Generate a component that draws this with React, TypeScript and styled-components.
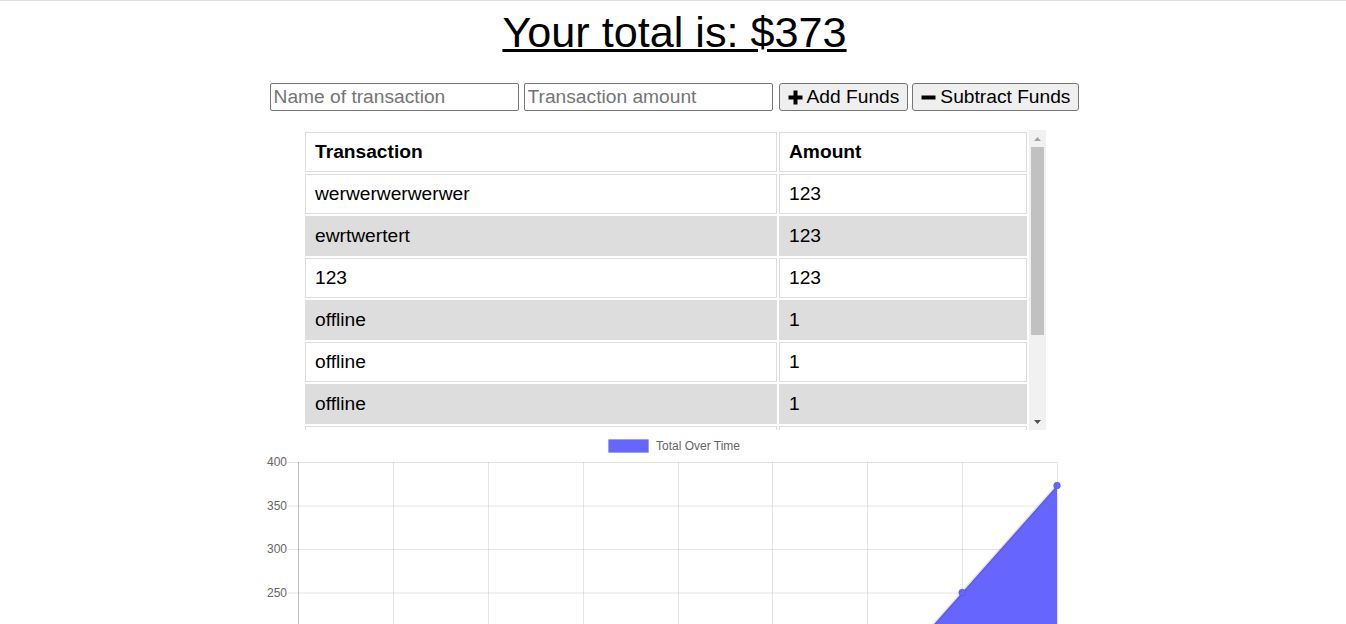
import React from "react";
import styled, { createGlobalStyle } from "styled-components";

const GlobalStyle = createGlobalStyle`
  html, body {
    margin: 0;
    padding: 0;
    overflow: hidden;
    background: #fff;
  }
  body {
    font-family: "Liberation Sans", Arial, sans-serif;
    color: #000;
  }
`;

const Page = styled.div`
  border-top: 1px solid #dedede;
  padding: 7px 0 0 3px;
`;

const Title = styled.h1`
  margin: 0;
  height: 49px;
  text-align: center;
  font-size: 43.2px;
  font-weight: normal;
  line-height: 49px;
  text-decoration: underline;
  text-decoration-thickness: 3px;
  text-decoration-skip-ink: auto;
`;

const FormRow = styled.div`
  display: flex;
  justify-content: center;
  align-items: center;
  margin-top: 26px;
  height: 28px;
`;

const TextInput = styled.input<{ $gap: number }>`
  box-sizing: border-box;
  width: 249px;
  height: 28px;
  margin: 0 ${(p) => p.$gap}px 0 0;
  padding: 1px 3px;
  border: 1px solid #767676;
  border-radius: 2px;
  font-family: "Liberation Sans", Arial, sans-serif;
  font-size: 19.2px;
  color: #000;
  background: #fff;
  &::placeholder {
    color: #757575;
  }
`;

const Button = styled.button<{ $gap: number }>`
  box-sizing: border-box;
  display: flex;
  align-items: center;
  gap: 4px;
  height: 28px;
  margin: 0 ${(p) => p.$gap}px 0 0;
  padding: 0 8px;
  border: 1px solid #767676;
  border-radius: 3px;
  background: #efefef;
  font-family: "Liberation Sans", Arial, sans-serif;
  font-size: 19.2px;
  color: #000;
  white-space: nowrap;
`;

const TableBox = styled.div`
  display: flex;
  width: 743px;
  height: 300px;
  margin: 19px auto 0;
`;

const TableViewport = styled.div`
  flex: 1;
  min-width: 0;
  overflow: hidden;
`;

const ScrollBar = styled.div`
  width: 17px;
  flex: none;
  display: flex;
  flex-direction: column;
  background: #f1f1f1;
`;

const ScrollArrow = styled.div`
  height: 17px;
  flex: none;
  display: flex;
  align-items: center;
  justify-content: center;
`;

const ScrollThumb = styled.div<{ $size: number }>`
  height: ${(p) => p.$size}px;
  margin: 0 2px;
  background: #c1c1c1;
  flex: none;
`;

const ScrollSpacer = styled.div`
  flex: 1;
`;

const Table = styled.table`
  width: 100%;
  border-collapse: separate;
  border-spacing: 2px;
  font-size: 19.2px;
  line-height: 22px;
`;

const HeadCell = styled.th<{ $narrow?: boolean }>`
  text-align: left;
  font-weight: bold;
  padding: 8px 9px;
  border: 1px solid #ddd;
  background: #fff;
  ${(p) => (p.$narrow ? "width: 228px;" : "")}
`;

const Row = styled.tr<{ $striped: boolean }>`
  & > td {
    background: ${(p) => (p.$striped ? "#ddd" : "#fff")};
  }
`;

const Cell = styled.td`
  padding: 8px 9px;
  border: 1px solid #ddd;
`;

const ChartWrap = styled.div`
  display: flex;
  justify-content: center;
`;

const ChartSvg = styled.svg`
  display: block;
  flex: none;
`;

const PlusIcon = () => (
  <svg width="15" height="15" viewBox="0 0 15 15" aria-hidden="true">
    <rect x="5.5" y="0.5" width="4" height="14" fill="#000" />
    <rect x="0.5" y="5.5" width="14" height="4" fill="#000" />
  </svg>
);

const MinusIcon = () => (
  <svg width="15" height="15" viewBox="0 0 15 15" aria-hidden="true">
    <rect x="0.5" y="5.5" width="14" height="4" fill="#000" />
  </svg>
);

const ArrowIcon = ({ up, color }: { up: boolean; color: string }) => (
  <svg width="7" height="4" viewBox="0 0 7 4" aria-hidden="true">
    <polygon points={up ? "3.5,0 7,4 0,4" : "0,0 7,0 3.5,4"} fill={color} />
  </svg>
);

const rows: [string, string][] = [
  ["werwerwerwerwer", "123"],
  ["ewrtwertert", "123"],
  ["123", "123"],
  ["offline", "1"],
  ["offline", "1"],
  ["offline", "1"],
  ["offline", "1"],
  ["test", "5"],
  ["test", "-5"],
];

const W = 831;
const H = 420;
const plotLeft = 39;
const plotRight = 798;
const plotTop = 32;
const unit = 0.87;
const yOf = (v: number) => plotTop + (400 - v) * unit;
const data = [0, 0, 1, 2, 3, 4, 127, 250, 373];
const xOf = (i: number) => plotLeft + (i * (plotRight - plotLeft)) / (data.length - 1);

const Chart = () => {
  const ticks = [400, 350, 300, 250, 200, 150, 100, 50, 0];
  const zeroY = yOf(0);
  const linePts = data.map((v, i) => `${xOf(i)},${yOf(v)}`).join(" ");
  const areaPts = `${xOf(0)},${zeroY} ${linePts} ${xOf(data.length - 1)},${zeroY}`;
  return (
    <ChartSvg width={W} height={H} viewBox={`0 0 ${W} ${H}`}>
      <rect x={349.5} y={9.5} width={40} height={13} fill="#6666ff" stroke="rgba(0,0,0,0.1)" strokeWidth={1} />
      <text x={397} y={20} fontFamily="Liberation Sans, Arial, sans-serif" fontSize={12} fill="#666">
        Total Over Time
      </text>
      {ticks.map((t) => (
        <g key={t}>
          <line x1={29} x2={plotRight} y1={yOf(t) + 0.5} y2={yOf(t) + 0.5} stroke="rgba(0,0,0,0.1)" strokeWidth={1} />
          <text
            x={28}
            y={yOf(t) + 4}
            textAnchor="end"
            fontFamily="Liberation Sans, Arial, sans-serif"
            fontSize={12}
            fill="#666"
          >
            {t}
          </text>
        </g>
      ))}
      {data.map((_, i) => (
        <line
          key={i}
          x1={Math.round(xOf(i)) + 0.5}
          x2={Math.round(xOf(i)) + 0.5}
          y1={plotTop}
          y2={zeroY + 10}
          stroke={i === 0 ? "rgba(0,0,0,0.25)" : "rgba(0,0,0,0.1)"}
          strokeWidth={1}
        />
      ))}
      <polygon points={areaPts} fill="#6666ff" />
      <polyline points={linePts} fill="none" stroke="rgba(0,0,0,0.1)" strokeWidth={3} />
      {data.map((v, i) => (
        <circle key={i} cx={xOf(i)} cy={yOf(v)} r={3.5} fill="#6666ff" stroke="rgba(0,0,0,0.1)" strokeWidth={1} />
      ))}
    </ChartSvg>
  );
};

export default function App() {
  return (
    <>
      <GlobalStyle />
      <Page>
        <Title>Your total is: $373</Title>
        <FormRow>
          <TextInput $gap={5} type="text" placeholder="Name of transaction" />
          <TextInput $gap={6} type="number" placeholder="Transaction amount" />
          <Button $gap={4}>
            <PlusIcon />
            Add Funds
          </Button>
          <Button $gap={0}>
            <MinusIcon />
            Subtract Funds
          </Button>
        </FormRow>
        <TableBox>
          <TableViewport>
            <Table>
              <thead>
                <tr>
                  <HeadCell>Transaction</HeadCell>
                  <HeadCell $narrow>Amount</HeadCell>
                </tr>
              </thead>
              <tbody>
                {rows.map(([name, amount], i) => (
                  <Row key={i} $striped={i % 2 === 1}>
                    <Cell>{name}</Cell>
                    <Cell>{amount}</Cell>
                  </Row>
                ))}
              </tbody>
            </Table>
          </TableViewport>
          <ScrollBar>
            <ScrollArrow>
              <ArrowIcon up color="#a3a3a3" />
            </ScrollArrow>
            <ScrollThumb $size={188} />
            <ScrollSpacer />
            <ScrollArrow>
              <ArrowIcon up={false} color="#505050" />
            </ScrollArrow>
          </ScrollBar>
        </TableBox>
        <ChartWrap>
          <Chart />
        </ChartWrap>
      </Page>
    </>
  );
}
